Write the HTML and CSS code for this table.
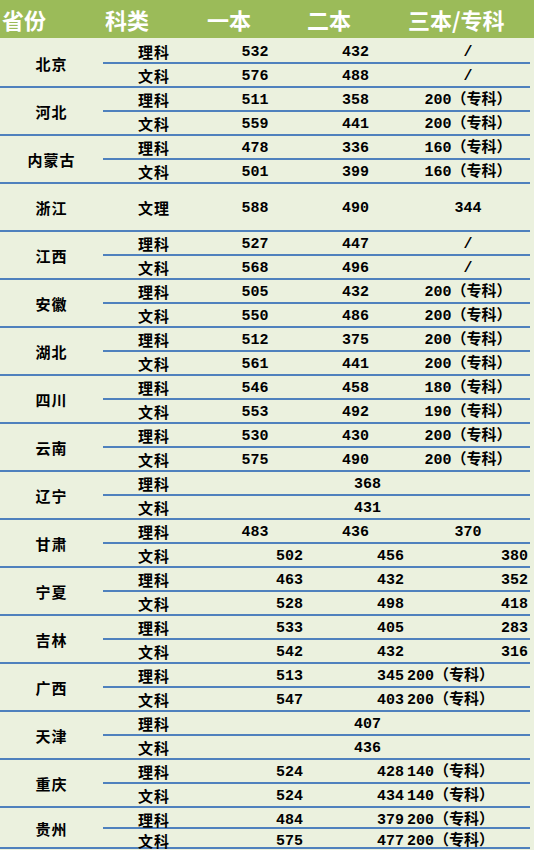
FILE: index.html
```html
<!DOCTYPE html>
<html lang="zh">
<head>
<meta charset="utf-8">
<title>分数线</title>
<link rel="stylesheet" href="styles.css">
</head>
<body>
<div class="sheet">
  <div class="head"><span>省份</span><span>科类</span><span>一本</span><span>二本</span><span>三本/专科</span></div>

  <div class="group">
    <div class="prov">北京</div>
    <div class="rows">
      <div class="row top"><span class="kind">理科</span><span class="n c">532</span><span class="n c">432</span><span class="n c">/</span></div>
      <div class="row"><span class="kind">文科</span><span class="n c">576</span><span class="n c">488</span><span class="n c">/</span></div>
    </div>
  </div>

  <div class="group">
    <div class="prov">河北</div>
    <div class="rows">
      <div class="row top"><span class="kind">理科</span><span class="n c">511</span><span class="n c">358</span><span class="n c">200（专科）</span></div>
      <div class="row"><span class="kind">文科</span><span class="n c">559</span><span class="n c">441</span><span class="n c">200（专科）</span></div>
    </div>
  </div>

  <div class="group">
    <div class="prov">内蒙古</div>
    <div class="rows">
      <div class="row top"><span class="kind">理科</span><span class="n c">478</span><span class="n c">336</span><span class="n c">160（专科）</span></div>
      <div class="row"><span class="kind">文科</span><span class="n c">501</span><span class="n c">399</span><span class="n c">160（专科）</span></div>
    </div>
  </div>

  <div class="group">
    <div class="prov">浙江</div>
    <div class="rows">
      <div class="row tall"><span class="kind">文理</span><span class="n c">588</span><span class="n c">490</span><span class="n c">344</span></div>
    </div>
  </div>

  <div class="group">
    <div class="prov">江西</div>
    <div class="rows">
      <div class="row top"><span class="kind">理科</span><span class="n c">527</span><span class="n c">447</span><span class="n c">/</span></div>
      <div class="row"><span class="kind">文科</span><span class="n c">568</span><span class="n c">496</span><span class="n c">/</span></div>
    </div>
  </div>

  <div class="group">
    <div class="prov">安徽</div>
    <div class="rows">
      <div class="row top"><span class="kind">理科</span><span class="n c">505</span><span class="n c">432</span><span class="n c">200（专科）</span></div>
      <div class="row"><span class="kind">文科</span><span class="n c">550</span><span class="n c">486</span><span class="n c">200（专科）</span></div>
    </div>
  </div>

  <div class="group">
    <div class="prov">湖北</div>
    <div class="rows">
      <div class="row top"><span class="kind">理科</span><span class="n c">512</span><span class="n c">375</span><span class="n c">200（专科）</span></div>
      <div class="row"><span class="kind">文科</span><span class="n c">561</span><span class="n c">441</span><span class="n c">200（专科）</span></div>
    </div>
  </div>

  <div class="group">
    <div class="prov">四川</div>
    <div class="rows">
      <div class="row top"><span class="kind">理科</span><span class="n c">546</span><span class="n c">458</span><span class="n c">180（专科）</span></div>
      <div class="row"><span class="kind">文科</span><span class="n c">553</span><span class="n c">492</span><span class="n c">190（专科）</span></div>
    </div>
  </div>

  <div class="group">
    <div class="prov">云南</div>
    <div class="rows">
      <div class="row top"><span class="kind">理科</span><span class="n c">530</span><span class="n c">430</span><span class="n c">200（专科）</span></div>
      <div class="row"><span class="kind">文科</span><span class="n c">575</span><span class="n c">490</span><span class="n c">200（专科）</span></div>
    </div>
  </div>

  <div class="group">
    <div class="prov">辽宁</div>
    <div class="rows">
      <div class="row top"><span class="kind">理科</span><span class="n c span">368</span></div>
      <div class="row"><span class="kind">文科</span><span class="n c span">431</span></div>
    </div>
  </div>

  <div class="group">
    <div class="prov">甘肃</div>
    <div class="rows">
      <div class="row top"><span class="kind">理科</span><span class="n c">483</span><span class="n c">436</span><span class="n c">370</span></div>
      <div class="row"><span class="kind">文科</span><span class="n r">502</span><span class="n r">456</span><span class="n r">380</span></div>
    </div>
  </div>

  <div class="group">
    <div class="prov">宁夏</div>
    <div class="rows">
      <div class="row top"><span class="kind">理科</span><span class="n r">463</span><span class="n r">432</span><span class="n r">352</span></div>
      <div class="row"><span class="kind">文科</span><span class="n r">528</span><span class="n r">498</span><span class="n r">418</span></div>
    </div>
  </div>

  <div class="group">
    <div class="prov">吉林</div>
    <div class="rows">
      <div class="row top"><span class="kind">理科</span><span class="n r">533</span><span class="n r">405</span><span class="n r">283</span></div>
      <div class="row"><span class="kind">文科</span><span class="n r">542</span><span class="n r">432</span><span class="n r">316</span></div>
    </div>
  </div>

  <div class="group">
    <div class="prov">广西</div>
    <div class="rows">
      <div class="row top"><span class="kind">理科</span><span class="n r">513</span><span class="n r">345</span><span class="n l">200（专科）</span></div>
      <div class="row"><span class="kind">文科</span><span class="n r">547</span><span class="n r">403</span><span class="n l">200（专科）</span></div>
    </div>
  </div>

  <div class="group">
    <div class="prov">天津</div>
    <div class="rows">
      <div class="row top"><span class="kind">理科</span><span class="n c span">407</span></div>
      <div class="row"><span class="kind">文科</span><span class="n c span">436</span></div>
    </div>
  </div>

  <div class="group">
    <div class="prov">重庆</div>
    <div class="rows">
      <div class="row top"><span class="kind">理科</span><span class="n r">524</span><span class="n r">428</span><span class="n l">140（专科）</span></div>
      <div class="row"><span class="kind">文科</span><span class="n r">524</span><span class="n r">434</span><span class="n l">140（专科）</span></div>
    </div>
  </div>

  <div class="group short">
    <div class="prov">贵州</div>
    <div class="rows">
      <div class="row top"><span class="kind">理科</span><span class="n r">484</span><span class="n r">379</span><span class="n l">200（专科）</span></div>
      <div class="row"><span class="kind">文科</span><span class="n r">575</span><span class="n r">477</span><span class="n l">200（专科）</span></div>
    </div>
  </div>
</div>
</body>
</html>
```

FILE: styles.css
```css
html, body {
  margin: 0;
  padding: 0;
}

body {
  background: #ebf1de;
  font-family: "Noto Sans CJK SC", "Noto Sans", sans-serif;
  color: #000000;
  width: 534px;
  height: 850px;
  overflow: hidden;
}

.sheet {
  width: 534px;
}

.head {
  display: grid;
  grid-template-columns: 103px 102px 100px 101px 1fr;
  align-items: center;
  height: 38px;
  margin-bottom: 2px;
  background: #9bbb59;
  color: #ffffff;
  font-size: 22px;
  font-weight: 700;
  line-height: 38px;
}

.head span {
  padding-left: 2px;
  white-space: nowrap;
}

.group {
  display: grid;
  grid-template-columns: 103px 1fr;
  width: 530px;
  border-bottom: 2px solid #4f81bd;
}

.prov {
  display: flex;
  align-items: center;
  justify-content: center;
  padding-top: 1px;
  font-size: 15px;
  font-weight: 700;
  letter-spacing: 1px;
}

.rows {
  display: flex;
  flex-direction: column;
}

.row {
  display: grid;
  grid-template-columns: 102px 100px 101px 124px;
  align-items: center;
  height: 22px;
}

.row.top {
  border-bottom: 2px solid #4f81bd;
}

.row.tall {
  height: 46px;
}

.short .row.top {
  height: 19px;
}

.short .row {
  height: 18px;
}

.kind {
  box-sizing: border-box;
  height: 22px;
  padding-top: 1px;
  line-height: 21px;
  text-align: center;
  font-size: 15px;
  font-weight: 700;
  letter-spacing: 1px;
}

.n {
  box-sizing: border-box;
  height: 22px;
  padding-top: 4px;
  line-height: 18px;
  font-family: "Liberation Mono", "Noto Sans CJK SC", monospace;
  font-size: 15px;
  font-weight: 700;
  white-space: nowrap;
}

.c {
  text-align: center;
}

.r {
  text-align: right;
  padding-right: 2px;
}

.l {
  text-align: left;
  padding-left: 1px;
}

.span {
  grid-column: span 3;
}
```
